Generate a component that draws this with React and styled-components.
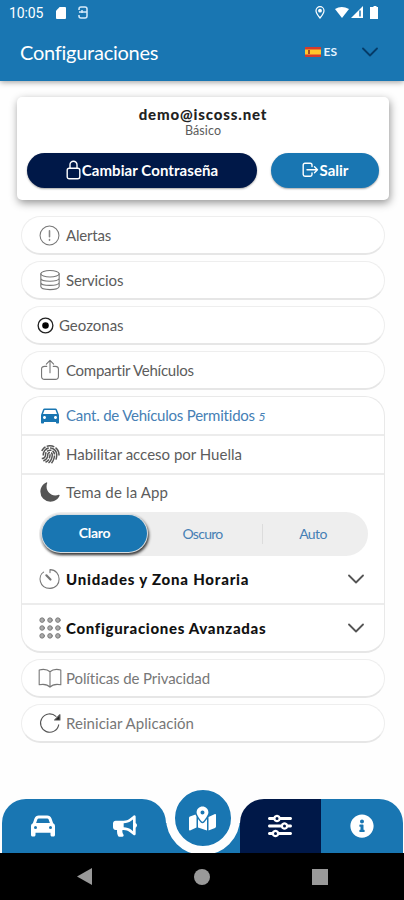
import React from 'react';
import styled, { createGlobalStyle } from 'styled-components';
import { FaBullhorn, FaMapMarkedAlt, FaInfoCircle } from 'react-icons/fa';
import { FaCar, FaSliders } from 'react-icons/fa6';
import { IoMdCar } from 'react-icons/io';
import { IoMoon } from 'react-icons/io5';
import { LiaFingerprintSolid } from 'react-icons/lia';

const blue = '#1976b2';
const navy = '#001848';

const GlobalStyle = createGlobalStyle`
  * {
    box-sizing: border-box;
  }

  body {
    margin: 0;
    background: #fefefe;
    font-family: Lato, 'Liberation Sans', sans-serif;
  }

  button {
    border: none;
    padding: 0;
    font-family: inherit;
    cursor: pointer;
  }

  svg {
    display: block;
    flex: none;
  }
`

const Screen = styled.div`
  width: 404px;
  height: 900px;
  display: flex;
  flex-direction: column;
  overflow: hidden;
`

const Text = styled.span`
  font-size: ${props => props.$size || 15}px;
  font-weight: ${props => props.$weight || 400};
  letter-spacing: ${props => props.$track || 0}px;
  color: ${props => props.$color || '#5c5c5c'};
  line-height: 20px;
  white-space: nowrap;
`

const Header = styled.header`
  height: 81px;
  flex: none;
  background: ${blue};
  box-shadow: 0 1px 6px rgba(0, 0, 0, .4);
`

const StatusBar = styled.div`
  height: 25px;
  padding: 0 25px 0 9px;
  display: flex;
  align-items: center;
  color: white;

  .clock {
    width: 47px;
    font: 14px Roboto, sans-serif;
    letter-spacing: -.1px;
  }

  .sd {
    margin-right: 12px;
  }

  .levels {
    margin-left: 9px;
  }
`

const Spacer = styled.div`
  flex: 1;
`

const TitleBar = styled.div`
  height: 54px;
  padding: 0 26px 0 20px;
  display: flex;
  align-items: center;
`

const Language = styled.div`
  display: flex;
  align-items: center;
  gap: 3px;
  margin-right: 25px;
`

const Main = styled.main`
  flex: 1;
  padding: 16px 15px 0 17px;
`

const Card = styled.section`
  height: 103px;
  padding: 7px 10px 0;
  border-radius: 5px;
  background: white;
  box-shadow: 1px 3px 8px rgba(0, 0, 0, .42);
  text-align: center;

  .email {
    height: 17px;
  }

  .plan {
    height: 15px;
    margin-bottom: 17px;
    line-height: 15px;
  }
`

const Actions = styled.div`
  display: flex;
  gap: 14px;
`

const Pill = styled.button`
  width: ${props => props.$width}px;
  height: 35px;
  padding-bottom: 2px;
  display: flex;
  align-items: center;
  justify-content: center;
  gap: 1px;
  border-radius: 18px;
  background: ${props => props.$bg};
  box-shadow: 0 1px 2px rgba(0, 0, 0, .35);
`

const List = styled.div`
  display: flex;
  flex-direction: column;
  gap: 6px;
  margin: 16px 4px 0;
`

const Row = styled.div`
  height: ${props => props.$height || 39}px;
  display: flex;
  align-items: center;
  gap: ${props => props.$gap || 5}px;
  padding: 0 20px 0 ${props => props.$left || 17}px;
`

const PillRow = styled(Row)`
  border: 1px solid #eee;
  border-bottom: 2px solid #e6e6e6;
  border-radius: 20px;
  background: white;
`

const Group = styled.section`
  height: 257px;
  border: 1px solid #e9e9e9;
  border-bottom: 2px solid #e6e6e6;
  border-radius: 20px;
  background: white;
`

const LineRow = styled(Row)`
  padding-bottom: ${props => props.$lift || 0}px;
  border-bottom: ${props => props.$last ? 'none' : '2px solid #ececec'};
`

const Segments = styled.div`
  width: 329px;
  height: 44px;
  margin: 0 0 0 17px;
  display: flex;
  align-items: center;
  border-radius: 22px;
  background: #eee;
`

const Segment = styled.button`
  width: 110px;
  height: 20px;
  background: none;
  border-right: ${props => props.$divided ? '1px solid #dcdcdc' : 'none'};
`

const ActiveSegment = styled(Segment)`
  width: 105px;
  height: 37px;
  margin: 0 3px 2px 3px;
  border-radius: 19px;
  background: ${blue};
  box-shadow: 0 0 0 1px #d8dde0, 1px 2px 3px 1px #333;
`

const OscuroSegment = styled(Segment)`
  width: 113px;
  padding-right: 7px;
`

const AutoSegment = styled(Segment)`
  width: 100px;
`

const BottomNav = styled.nav`
  height: 54px;
  flex: none;
  display: flex;
  padding: 0 1px 0 2px;
`

const Tab = styled.button`
  width: 82px;
  height: 54px;
  display: flex;
  align-items: center;
  justify-content: center;
  color: white;
  background: ${props => props.$active ? navy : blue};
  border-radius: ${props => props.$radius || 0};
`

const MapSlot = styled.div`
  width: 74px;
  height: 54px;
  display: flex;
  justify-content: center;
  background: linear-gradient(transparent 24px, ${blue} 24px);
`

const MapButton = styled.button`
  width: 74px;
  height: 74px;
  margin-top: -18px;
  flex: none;
  display: flex;
  align-items: center;
  justify-content: center;
  border: 9px solid #fefefe;
  border-radius: 50%;
  color: white;
  background: ${blue};
`

const SystemBar = styled.div`
  height: 47px;
  flex: none;
  display: grid;
  grid-template-columns: 117px 118px 117px;
  justify-content: center;
  justify-items: center;
  align-items: center;
  background: black;
  z-index: 1;
`

const Icon = ({ size = 22, w, h, box = '0 0 24 24', color = '#777', stroke = 1.2, children }) => (
  <svg width={w || size} height={h || size} viewBox={box} fill="none" stroke={color} strokeWidth={stroke} strokeLinecap="round" strokeLinejoin="round">
    {children}
  </svg>
)

const Chevron = ({ color = '#555' }) => (
  <Icon w={16} h={10} box="0 0 16 10" color={color} stroke={1.8}><path d="M1 1.5 8 8.5 15 1.5" /></Icon>
)

const AlertIcon = () => (
  <Icon size={21}><circle cx="12" cy="12" r="10.8" /><path d="M12 6.5v7M12 16.6v.7" stroke="#888" strokeWidth="1.8" /></Icon>
)

const StackIcon = () => (
  <Icon>
    <ellipse cx="12" cy="5.2" rx="10" ry="3.5" />
    <path d="M2 5.2v14c0 4.4 20 4.4 20 0v-14M2 10c0 4.400 20 4.400 20 0M2 14.600c0 4.400 20 4.400 20 0" />
  </Icon>
)

const TargetIcon = () => (
  <Icon size={17} color="#222" stroke={1.9}>
    <circle cx="12" cy="12" r="10.4" />
    <circle cx="12" cy="12" r="3.7" fill="#000" stroke="#000" />
  </Icon>
)

const ShareIcon = () => (
  <Icon><path d="M8.500 8H6.200C4 8 2.800 9 2.800 11v8c0 2 1.200 3.200 3.400 3.200h11.600c2.200 0 3.400-1.200 3.400-3.200v-8c0-2-1.200-3-3.400-3h-2.300M12 15V1.500M8 5.500l4-4 4 4" /></Icon>
)

const DialIcon = () => (
  <Icon><path d="M12 5V1.800C25 2 25.500 22.200 12 22.200 0 22.200-1.500 8.500 5 4.500" /><path d="m8 8 4.500 4.500" strokeWidth="2.4" /></Icon>
)

const dots = [3.4, 12, 20.6];

const KeypadIcon = () => (
  <Icon stroke={1}>
    {dots.map(y => dots.map(x => <circle key={`${x}-${y}`} cx={x} cy={y} r="2.5" fill="#aaa" />))}
  </Icon>
)

const BookIcon = () => (
  <Icon w={24} h={22} box="0 0 26 24">
    <path d="M13 5.200C10.500 2.800 5.500 2.200 1.200 3.200v16.200c4.300-.8 9.300-.2 11.800 2.600 2.500-2.800 7.500-3.400 11.800-2.600V3.200C20.500 2.200 15.500 2.800 13 5.200zV21" />
  </Icon>
)

const ReloadIcon = () => (
  <Icon color="#555"><path d="M21.500 14A10 10 0 1 1 18.500 4.800" /><path d="M22.800 3v5.800H17z" fill="#222" /></Icon>
)

const LockIcon = () => (
  <Icon w={15} h={20} box="0 0 15 20" color="#fff" stroke={1.4}>
    <rect x="1.2" y="8.3" width="12.6" height="10.5" rx="2" />
    <path d="M4 8.300V4.800a3.500 3.500 0 0 1 7 0v3.500" />
  </Icon>
)

const ExitIcon = () => (
  <Icon w={17} h={16} box="0 0 17 16" color="#fff" stroke={1.4}>
    <path d="M10 4.500V3c0-1-.6-1.700-1.700-1.700H3C1.900 1.300 1.200 2 1.200 3v9.500c0 1 .7 1.700 1.800 1.700h5.300c1.100 0 1.700-.7 1.700-1.700V11M5 7.800h10.500M12.500 4.800l3 3-3 3" />
  </Icon>
)

export default function App() {
  return (
    <Screen>
      <GlobalStyle />
      <Header>
        <StatusBar>
          <span className="clock">10:05</span>
          <svg className="sd" width="10" height="12" viewBox="0 0 11 13" fill="#fff"><path d="M4 0h6q1 0 1 1v11q0 1-1 1H1q-1 0-1-1V4z" /></svg>
          <svg width="10" height="13" viewBox="0 0 10 13" fill="none" stroke="#d7ebfa" strokeWidth="1.5">
            <path d="M1 4V3q0-2 2-2h4q2 0 2 2v7q0 2-2 2H3q-2 0-2-2V9M1 6h8M4 4v3" />
          </svg>
          <Spacer />
          <svg width="10" height="13" viewBox="0 0 10 13" fill="none" stroke="#fff" strokeWidth="1.2">
            <path d="M5 12C2.500 9 1 7 1 4.700a4 4 0 0 1 8 0C9 7 7.500 9 5 12z" /><circle cx="5" cy="4.7" r="1.3" fill="#fff" />
          </svg>
          <svg className="levels" width="45" height="13" viewBox="0 0 45 13" fill="#fff">
            <path d="M1 3q6.500-4 14 0L8 12z" />
            <path d="M29 0v12H17z" /><path d="M26 4.500v6" stroke={blue} strokeWidth="1.5" />
            <path d="M38 1h1.500V0h3v1H44v12h-8V1z" />
          </svg>
        </StatusBar>
        <TitleBar>
          <Text $size={20} $color="#fff" $track={-.25}>Configuraciones</Text>
          <Spacer />
          <Language>
            <svg width="16" height="10" viewBox="0 0 16 10">
              <path fill="#d43a2c" d="M0 0h16v10H0z" /><path fill="#ffc62b" d="M0 2.500h16v5H0z" /><path fill="#a54c20" d="M3 3h2v4H3z" />
            </svg>
            <Text $size={12} $color="#e5f3ff" $weight={700}>ES</Text>
          </Language>
          <Chevron color="#063c68" />
        </TitleBar>
      </Header>
      <Main>
        <Card>
          <div className="email"><Text $weight={900} $color="#222" $track={.85}>demo@iscoss.net</Text></div>
          <div className="plan"><Text $size={12.5} $track={.1}>Básico</Text></div>
          <Actions>
            <Pill $width={230} $bg={navy}><LockIcon /><Text $color="#fff" $weight={700} $track={.08}>Cambiar Contraseña</Text></Pill>
            <Pill $width={108} $bg={blue}><ExitIcon /><Text $color="#fff" $weight={700}>Salir</Text></Pill>
          </Actions>
        </Card>
        <List>
          <PillRow $gap={6}><AlertIcon /><Text $track={-.2}>Alertas</Text></PillRow>
          <PillRow><StackIcon /><Text $track={-.15}>Servicios</Text></PillRow>
          <PillRow $left={15}><TargetIcon /><Text>Geozonas</Text></PillRow>
          <PillRow><ShareIcon /><Text $track={-.25}>Compartir Vehículos</Text></PillRow>
          <Group>
            <LineRow $height={39} $gap={4}>
              <IoMdCar size={24} color={blue} style={{ marginLeft: -1 }} />
              <Text $color="#4680b5" $track={-.22}>Cant. de Vehículos Permitidos <Text as="i" $size={12} $color="#4680b5">5</Text></Text>
            </LineRow>
            <LineRow $height={39} $lift={2}><LiaFingerprintSolid size={24} color="#555" style={{ margin: '0 -1px' }} /><Text>Habilitar acceso por Huella</Text></LineRow>
            <LineRow $height={37} $last $lift={3}><IoMoon size={22} color="#555" /><Text $track={.15}>Tema de la App</Text></LineRow>
            <Segments>
              <ActiveSegment><Text $size={14} $weight={700} $color="#fff" $track={-.3}>Claro</Text></ActiveSegment>
              <OscuroSegment $divided><Text $size={14} $color="#4680b5" $track={-.7}>Oscuro</Text></OscuroSegment>
              <AutoSegment><Text $size={14} $color="#4680b5" $track={-.6}>Auto</Text></AutoSegment>
            </Segments>
            <LineRow $height={49} $lift={1}>
              <DialIcon /><Text $weight={900} $color="#111" $track={.8}>Unidades y Zona Horaria</Text><Spacer /><Chevron />
            </LineRow>
            <LineRow $height={46} $last $lift={1}>
              <KeypadIcon /><Text $weight={900} $color="#111" $track={.68}>Configuraciones Avanzadas</Text><Spacer /><Chevron />
            </LineRow>
          </Group>
          <PillRow $left={16} $gap={4}><BookIcon /><Text $color="#777" $track={-.1}>Políticas de Privacidad</Text></PillRow>
          <PillRow><ReloadIcon /><Text $color="#777" $track={.05}>Reiniciar Aplicación</Text></PillRow>
        </List>
      </Main>
      <BottomNav>
        <Tab $radius="24px 0 0 0"><FaCar size={24} /></Tab>
        <Tab $radius="0 24px 0 0"><FaBullhorn size={24} /></Tab>
        <MapSlot><MapButton><FaMapMarkedAlt size={27} /></MapButton></MapSlot>
        <Tab $active $radius="24px 0 0 0"><FaSliders size={24} /></Tab>
        <Tab $radius="0 24px 0 0"><FaInfoCircle size={24} /></Tab>
      </BottomNav>
      <SystemBar>
        <svg width="15" height="17" viewBox="0 0 15 17" fill="#999"><path d="M15 0v17L0 8.500z" /></svg>
        <svg width="16" height="16" viewBox="0 0 16 16" fill="#999"><circle cx="8" cy="8" r="8" /></svg>
        <svg width="16" height="16" viewBox="0 0 16 16" fill="#999"><path d="M0 0h16v16H0z" /></svg>
      </SystemBar>
    </Screen>
  );
};
